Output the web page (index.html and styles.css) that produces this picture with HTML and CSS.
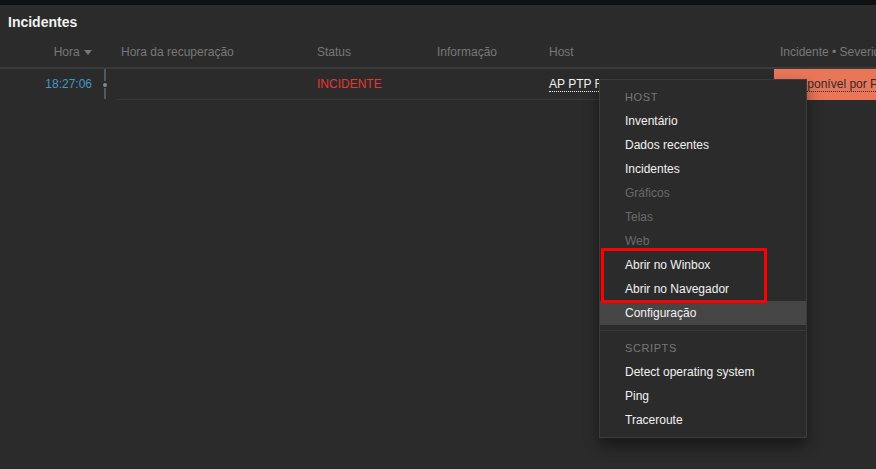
FILE: index.html
```html
<!DOCTYPE html>
<html lang="pt">
<head>
<meta charset="utf-8">
<title>Incidentes</title>
<link rel="stylesheet" href="styles.css">
</head>
<body>
<div class="topbar"></div>
<h1 class="title">Incidentes</h1>
<div class="grid head">
  <div class="c c-time">Hora <span class="sort"></span></div>
  <div class="c c-line"></div>
  <div class="c">Hora da recuperação</div>
  <div class="c">Status</div>
  <div class="c">Informação</div>
  <div class="c">Host</div>
  <div class="c c-sev">Incidente • Severidade</div>
</div>
<div class="grid row">
  <div class="c c-time time">18:27:06</div>
  <div class="c c-line"><span class="tl tl-top"></span><span class="tl-dot"></span><span class="tl tl-bot"></span></div>
  <div class="c b"></div>
  <div class="c b status">INCIDENTE</div>
  <div class="c b"></div>
  <div class="c b"><span class="link host">AP PTP Fazenda</span></div>
  <div class="c b c-sev sev"><span class="link dark">Indisponível por Ping</span></div>
</div>

<div class="menu">
  <ul class="sect">
    <li class="mh">HOST</li>
    <li>Inventário</li>
    <li>Dados recentes</li>
    <li>Incidentes</li>
    <li class="dis">Gráficos</li>
    <li class="dis">Telas</li>
    <li class="dis">Web</li>
    <li>Abrir no Winbox</li>
    <li>Abrir no Navegador</li>
    <li class="hl">Configuração</li>
  </ul>
  <ul class="sect sep">
    <li class="mh">SCRIPTS</li>
    <li>Detect operating system</li>
    <li>Ping</li>
    <li>Traceroute</li>
  </ul>
</div>
<div class="mark"></div>
</body>
</html>
```

FILE: styles.css
```css
html, body {
  margin: 0;
  padding: 0;
  background: #2b2b2b;
  font-family: "Liberation Sans", Arial, sans-serif;
  font-size: 12px;
  color: #f2f2f2;
  overflow: hidden;
  width: 876px;
  height: 469px;
}
.topbar {
  height: 5px;
  background: #0f1012;
}
.title {
  margin: 0;
  padding: 8px 0 0 8px;
  font-size: 14px;
  line-height: 18px;
  font-weight: bold;
  color: #f2f2f2;
}
.grid {
  display: grid;
  grid-template-columns: 96px 20px 196px 120px 112px 230px 1fr;
  white-space: nowrap;
}
.head {
  padding-top: 10px;
  border-bottom: 2px solid #3a3a3a;
  color: #787878;
}
.head .c {
  line-height: 22px;
  padding-bottom: 4px;
  padding-left: 5px;
  overflow: hidden;
}
.c-time {
  text-align: right;
  padding-right: 4px;
  padding-left: 0 !important;
}
.head .c-sev { padding-left: 6px; }
.sort {
  display: inline-block;
  width: 0;
  height: 0;
  border-left: 4px solid transparent;
  border-right: 4px solid transparent;
  border-top: 5px solid #787878;
  vertical-align: 1px;
  margin-left: 1px;
}
.row .c {
  height: 30px;
  line-height: 31px;
  padding-left: 5px;
  overflow: hidden;
}
.row .b {
  border-bottom: 1px solid #383838;
}
.time { color: #4796c4; }
.c-line {
  position: relative;
  padding: 0 !important;
}
.tl {
  position: absolute;
  left: 8px;
  width: 2px;
  background: #4d5860;
}
.tl-top { top: 0; height: 12px; }
.tl-bot { top: 19px; height: 12px; }
.tl-dot {
  position: absolute;
  left: 7px;
  top: 14px;
  width: 4px;
  height: 4px;
  border-radius: 2px;
  background: #7d8c96;
}
.status { color: #e33734; }
.link { border-bottom: 1px dotted currentColor; }
.host { color: #f2f2f2; }
.sev {
  background: #e97659;
  padding-left: 8px !important;
  border-bottom-color: #e97659 !important;
}
.dark { color: #2b2b2b; }

.menu {
  position: absolute;
  left: 599px;
  top: 79px;
  width: 206px;
  border: 1px solid #3c3c3c;
  background: #2b2b2b;
  box-shadow: 0 8px 14px rgba(0, 0, 0, 0.45);
  padding: 5px 0;
}
.sect {
  list-style: none;
  margin: 0;
  padding: 0;
}
.sect li {
  line-height: 24px;
  height: 24px;
  padding-left: 25px;
  color: #f2f2f2;
  white-space: nowrap;
}
.sect li.mh {
  color: #787878;
  font-size: 11px;
  letter-spacing: 0.6px;
}
.sect li.dis { color: #6a6a6a; }
.sect li.hl { background: #454545; }
.sep {
  margin-top: 5px !important;
  border-top: 1px solid #383838;
  padding-top: 5px !important;
}
.mark {
  position: absolute;
  left: 601px;
  top: 248px;
  width: 166px;
  height: 55px;
  box-sizing: border-box;
  border: 3px solid #ff0000;
}
```
